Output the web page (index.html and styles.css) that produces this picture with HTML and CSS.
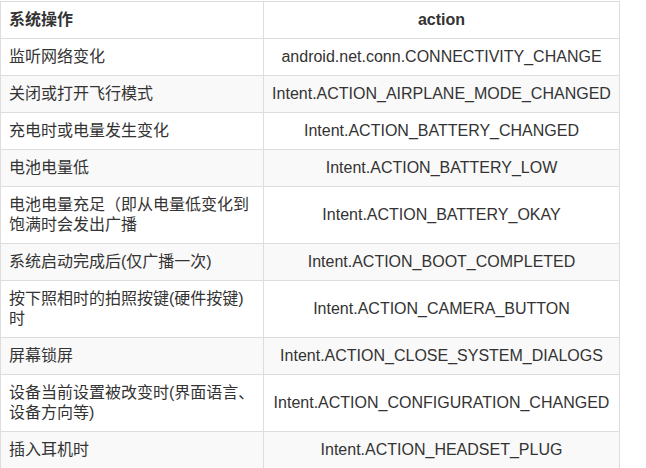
FILE: index.html
```html
<!DOCTYPE html>
<html>
<head>
<meta charset="utf-8">
<link rel="stylesheet" href="styles.css">
</head>
<body>
<table class="tbl">
  <colgroup><col class="c1"><col class="c2"></colgroup>
  <thead>
    <tr><th class="left">系统操作</th><th class="center">action</th></tr>
  </thead>
  <tbody>
    <tr><td>监听网络变化</td><td class="center">android.net.conn.CONNECTIVITY_CHANGE</td></tr>
    <tr><td>关闭或打开飞行模式</td><td class="center">Intent.ACTION_AIRPLANE_MODE_CHANGED</td></tr>
    <tr><td>充电时或电量发生变化</td><td class="center">Intent.ACTION_BATTERY_CHANGED</td></tr>
    <tr><td>电池电量低</td><td class="center">Intent.ACTION_BATTERY_LOW</td></tr>
    <tr><td>电池电量充足（即从电量低变化到饱满时会发出广播</td><td class="center">Intent.ACTION_BATTERY_OKAY</td></tr>
    <tr><td>系统启动完成后(仅广播一次)</td><td class="center">Intent.ACTION_BOOT_COMPLETED</td></tr>
    <tr><td>按下照相时的拍照按键(硬件按键)时</td><td class="center">Intent.ACTION_CAMERA_BUTTON</td></tr>
    <tr><td>屏幕锁屏</td><td class="center">Intent.ACTION_CLOSE_SYSTEM_DIALOGS</td></tr>
    <tr><td>设备当前设置被改变时(界面语言、设备方向等)</td><td class="center">Intent.ACTION_CONFIGURATION_CHANGED</td></tr>
    <tr><td>插入耳机时</td><td class="center">Intent.ACTION_HEADSET_PLUG</td></tr>
  </tbody>
</table>
</body>
</html>
```

FILE: styles.css
```css
html, body {
  margin: 0;
  padding: 0;
  background: #fff;
}
body {
  padding-top: 1px;
  font-family: "Liberation Sans", "Noto Sans CJK SC", sans-serif;
  font-size: 16px;
  line-height: 20px;
  color: #333;
}
.tbl {
  border-collapse: collapse;
  table-layout: fixed;
  width: 620px;
  border: 1px solid #ddd;
}
.c1 { width: 263px; }
.tbl th, .tbl td {
  border: 1px solid #ddd;
  padding: 8px;
  vertical-align: middle;
}
.tbl th { font-weight: bold; }
.left { text-align: left; }
.center { text-align: center; }
.tbl tbody tr:nth-child(even) td { background: #f9f9f9; }
```
